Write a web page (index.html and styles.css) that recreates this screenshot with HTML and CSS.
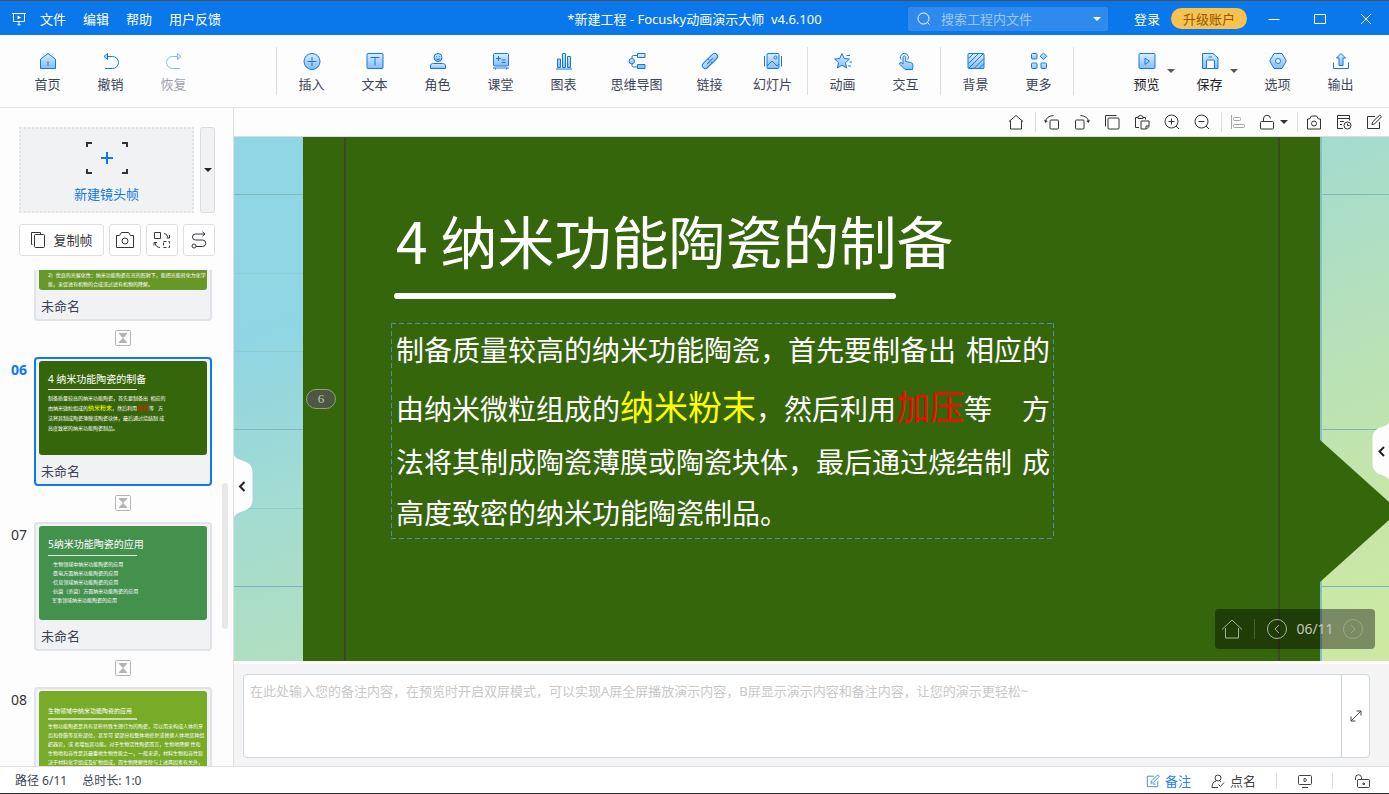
FILE: index.html
```html
<!DOCTYPE html>
<html lang="zh-CN">
<head>
<meta charset="utf-8">
<title>Focusky动画演示大师</title>
<link rel="stylesheet" href="styles.css">
</head>
<body>
<svg class="defs" aria-hidden="true"><defs><linearGradient id="g" x1="0" y1="0" x2="0" y2="1"><stop offset="0" stop-color="#dcecfe"/><stop offset="1" stop-color="#84bdfb"/></linearGradient></defs></svg>

<header class="titlebar">
  <nav class="menu">
    <svg class="logo" width="14" height="14" viewBox="0 0 14 14"><path d="M0 1.500h14M1.500 1.500v8h11v-8M7 9.500v3.500M5.500 12l1.500 1.500L8.500 12"/><path class="solid" d="M5.500 3.500v4l3.500-2z"/></svg>
    <button>文件</button><button>编辑</button><button>帮助</button><button>用户反馈</button>
  </nav>
  <div class="title">*新建工程 - Focusky动画演示大师&nbsp; v4.6.100</div>
  <div class="title-right">
    <label class="search">
      <svg width="14" height="14" viewBox="0 0 14 14"><circle cx="6.500" cy="6.500" r="5.500"/><path d="M10.500 10.500l2 2"/></svg>
      <input type="text" placeholder="搜索工程内文件" aria-label="搜索工程内文件">
      <span class="caret"></span>
    </label>
    <button class="login">登录</button>
    <button class="upgrade">升级账户</button>
    <div class="window-buttons">
      <button aria-label="最小化"><svg width="12" height="12" viewBox="0 0 12 12"><path d="M.5 6.500h11"/></svg></button>
      <button aria-label="最大化"><svg width="12" height="12" viewBox="0 0 12 12"><path d="M.5 1.500h11v9H.5z"/></svg></button>
      <button aria-label="关闭"><svg width="12" height="12" viewBox="0 0 12 12"><path d="M1 1l10 10M11 1L1 11"/></svg></button>
    </div>
  </div>
</header>

<div class="ribbon">
  <button class="tool"><svg viewBox="0 0 18 18"><path class="f" d="M1.500 16.500V7.200L9 1.500l7.500 5.700v9.300z"/><path d="M9 9v5"/></svg>首页</button>
  <button class="tool"><svg viewBox="0 0 18 18"><path d="M6 4.500h4.500a6 6 0 0 1 0 12H3"/><path class="f" d="M2 4.500l3.500-3v6z"/></svg>撤销</button>
  <button class="tool" disabled><svg viewBox="0 0 18 18"><path d="M12 4.500H7.500a6 6 0 0 0 0 12H15"/><path class="f" d="M16 4.500l-3.500-3v6z"/></svg>恢复</button>
  <span class="rule rule-first"></span>
  <button class="tool"><svg viewBox="0 0 18 18"><circle class="f" cx="9" cy="9.500" r="8"/><path d="M9 5v9M4.500 9.500h9"/></svg>插入</button>
  <button class="tool"><svg viewBox="0 0 18 18"><rect class="f" x="1" y="1.500" width="16" height="15" rx="1"/><path d="M4.500 5.500h9M9 5.500v8"/></svg>文本</button>
  <button class="tool"><svg viewBox="0 0 18 18"><path class="f" d="M1.500 16.500v-2.500c0-1.700 1-2.500 3-2.500h9c2 0 3 .8 3 2.500v2.500z"/><circle class="f" cx="9" cy="5.500" r="4"/><path d="M7 6.500c.8 1.500 3.200 1.500 4 0M7.500 4.200v.6M10.500 4.200v.6"/></svg>角色</button>
  <button class="tool"><svg viewBox="0 0 18 18"><rect class="f" x="1.500" y="1.500" width="15" height="12.500" rx="1"/><path d="M1 16h16M3.500 16v1.500M14.500 16v1.500M4 6.500h5M6.500 4v5M9.500 8h4M9.500 10.500h4"/></svg>课堂</button>
  <button class="tool"><svg viewBox="0 0 18 18"><path class="f" d="M2.500 7h3v8.500h-3zM7.500 1.500h3v14h-3zM12.500 4.500h3v11h-3z"/><path d="M1 17h16"/></svg>图表</button>
  <button class="tool tool-wide"><svg viewBox="0 0 18 18"><path d="M4 6.500V5q0-1.500 1.500-1.500H9M4 12v1.500Q4 15 5.500 15H9"/><circle class="f" cx="3.800" cy="9.200" r="2.700"/><path class="f" d="M9.500 1.500H17v4H9.500zM9.500 12.500H17v4H9.500z"/></svg>思维导图</button>
  <button class="tool"><svg viewBox="0 0 18 18"><g transform="rotate(-45 9 9)"><rect class="f" x="-.5" y="6" width="19" height="6" rx="3"/><path d="M5 9h8M9 6v1.500M9 10.500v1.500"/></g></svg>链接</button>
  <button class="tool"><svg viewBox="0 0 18 18"><rect class="f" x="3" y="1.500" width="12" height="15" rx="1"/><path d="M3 14l5-5 5 5 2-2M.5 4v10.500M17.500 4v10.500"/><circle cx="11.500" cy="5.500" r="1.500"/></svg>幻灯片</button>
  <span class="rule"></span>
  <button class="tool"><svg viewBox="0 0 18 18"><path class="f" d="M8 1.500l2.200 5 5.300.5-4 3.700 1.200 5.300L8 13.300 3.300 16l1.200-5.300L.6 7l5.200-.5z"/><path d="M12.500 3.500H16M15.500 10H18M14 14h3"/></svg>动画</button>
  <button class="tool"><svg viewBox="0 0 18 18"><path class="f" d="M6 5.500q0-1.500 1.300-1.500T8.700 5.500V9.500l5 1q2.500.6 2.300 3l-.5 4H8L3 12.500q-1.500-1.800 1-2L6 12z"/><path d="M4 7.500A4 4 0 1 1 10.800 7.500"/></svg>交互</button>
  <span class="rule"></span>
  <button class="tool"><svg viewBox="0 0 18 18"><rect class="f" x="1" y="1.500" width="16" height="15" rx="1"/><path d="M1.500 6.500l5-5M1.500 11.500l10-10M2 16L16.500 1.500M7 16.500l10-10M12 16.500l5-5"/></svg>背景</button>
  <button class="tool"><svg viewBox="0 0 18 18"><rect class="f" x="1.500" y="1.500" width="5.500" height="5.500" rx="1"/><path class="f" d="M13.500 1l3.300 3.300-3.300 3.300-3.300-3.300z"/><rect class="f" x="1.500" y="11" width="5.500" height="5.500" rx="1"/><rect class="f" x="11" y="11" width="5.500" height="5.500" rx="1"/></svg>更多</button>
  <span class="rule"></span>
  <div class="ribbon-end">
    <button class="tool tool-dark"><svg viewBox="0 0 18 18"><rect class="f" x="1" y="1.500" width="16" height="15" rx="1"/><path d="M7 6v6.500l4.500-3.300z"/></svg>预览<span class="caret"></span></button>
    <button class="tool tool-dark"><svg viewBox="0 0 18 18"><path class="f" d="M1.500 1.500H12L17 6v10.500H1.500z"/><path class="w" d="M5.500 16.500V9q0-1 1-1h6q1 0 1 1v7.500z"/><path d="M7.500 5H11"/></svg>保存<span class="caret"></span></button>
    <button class="tool tool-gap"><svg viewBox="0 0 18 18"><path class="f" d="M5 1.500h8l4.300 7.500-4.300 7.500H5L.7 9z"/><circle class="w" cx="9" cy="9" r="2.500"/></svg>选项</button>
    <button class="tool"><svg viewBox="0 0 18 18"><path class="f" d="M9 1.500l4.500 4.500h-2.500v7.500H7V6H4.500z"/><path d="M1.500 10.500v6h15v-6"/></svg>输出</button>
  </div>
</div>

<div class="workspace">
  <aside class="sidebar">
    <div class="new-row">
      <button class="new-frame">
        <svg width="44" height="34" viewBox="0 0 44 34"><path class="corner" d="M2 6V2h5M37 2h5v4M2 28v4h5M37 32h5v-4"/><path class="plus" d="M22 11v12M16 17h12"/></svg>
        新建镜头帧
      </button>
      <button class="new-more" aria-label="更多镜头帧"><span class="caret"></span></button>
    </div>
    <div class="frame-tools">
      <button class="copy"><svg width="16" height="18" viewBox="0 0 16 18"><path d="M2.500 13.500h-1v-12h9v2"/><rect x="4.500" y="3.500" width="10" height="13" rx="1"/></svg>复制帧</button>
      <button aria-label="截图"><svg width="18" height="18" viewBox="0 0 18 18"><path d="M.5 4.500h3l2-3h7l2 3h3v12H.5z"/><circle cx="9" cy="10" r="3"/></svg></button>
      <button aria-label="替换"><svg width="18" height="18" viewBox="0 0 18 18"><path d="M1.500 1.500h6v6h-6zM11 2.500q3 0 4 4M16.500 4v3h-3M7 16.500q-4 0-5-4.500M1 14.500v-3h3"/><path stroke-dasharray="3 2" d="M10.500 10.500h6v6h-6z"/></svg></button>
      <button aria-label="路径"><svg width="16" height="18" viewBox="0 0 16 18"><path d="M13.500 3H4.500a3 3 0 0 0 0 6h7a3 3 0 0 1 0 6.500H5M11.500.8L14 3l-2.500 2.200"/><circle cx="3" cy="15" r="2"/></svg></button>
    </div>
    <div class="frame-list">
      <ol class="frames">
        <li class="frame"><span class="no"></span>
          <div class="card"><div class="thumb t05"><p>2）优良的光催化性：纳米功能陶瓷在光的照射下，能把光能转化为化学<br>能，来促进有机物的合成或过滤有机物的降解。</p></div><div class="name">未命名</div></div></li>
        <li class="link"><svg width="16" height="16" viewBox="0 0 16 16"><rect x=".5" y=".5" width="15" height="15" rx="1"/><path d="M4 3h8v1L8.500 7.500v1L12 12v1H4v-1l3.500-3.500v-1L4 4z"/></svg></li>
        <li class="frame current"><span class="no">06</span>
          <div class="card"><div class="thumb t06"><h4>4 纳米功能陶瓷的制备</h4><hr><p>制备质量较高的纳米功能陶瓷，首先要制备出 &nbsp;相应的<br>由纳米微粒组成的<b class="yellow">纳米粉末</b>，然后利用<b class="red">加压</b>等 &nbsp; 方<br>法将其制成陶瓷薄膜或陶瓷块体，最后通过烧结制 成<br>高度致密的纳米功能陶瓷制品。</p></div><div class="name">未命名</div></div></li>
        <li class="link"><svg width="16" height="16" viewBox="0 0 16 16"><rect x=".5" y=".5" width="15" height="15" rx="1"/><path d="M4 3h8v1L8.500 7.500v1L12 12v1H4v-1l3.500-3.500v-1L4 4z"/></svg></li>
        <li class="frame"><span class="no">07</span>
          <div class="card"><div class="thumb t07"><h4>5纳米功能陶瓷的应用</h4><hr><p>·生物领域中纳米功能陶瓷的应用<br>·医电方面纳米功能陶瓷的应用<br>·信息领域纳米功能陶瓷的应用<br>·抗菌（杀菌）方面纳米功能陶瓷的应用<br>军事领域纳米功能陶瓷的应用</p></div><div class="name">未命名</div></div></li>
        <li class="link"><svg width="16" height="16" viewBox="0 0 16 16"><rect x=".5" y=".5" width="15" height="15" rx="1"/><path d="M4 3h8v1L8.500 7.500v1L12 12v1H4v-1l3.500-3.500v-1L4 4z"/></svg></li>
        <li class="frame"><span class="no">08</span>
          <div class="card"><div class="thumb t08"><h4>生物领域中纳米功能陶瓷的应用</h4><hr><p>生物功能陶瓷是具有某些特殊生理行为的陶瓷，可以用来构成人体的牙<br>齿和骨骼等某些部位，甚至可 望部分和整体地修复或替换人体地某种组<br>织器官，或 者增加其功能。对于生物活性陶瓷而言，生物地降解 性和<br>生物地和容性是其最重地生物性能之一，一般来讲，材料生物和容性取<br>决于材料化学组成及矿物组成，而生物降解性除与上述两因素有关外，</p></div></div></li>
      </ol>
      <span class="scrollbar"></span>
    </div>
  </aside>

  <main class="editor">
    <div class="quickbar">
      <button aria-label="主页"><svg viewBox="0 0 16 16"><path d="M1 7.500l7-6 7 6M2.500 6.500V15h11V6.500"/></svg></button>
      <span class="rule"></span>
      <button aria-label="左转"><svg viewBox="0 0 16 16"><rect x="6" y="6" width="8.500" height="9" rx="1"/><path d="M1.500 8Q2 2 9.500 1.500"/><path class="s" d="M.2 5.800L3.800 7 1.200 9z"/></svg></button>
      <button aria-label="右转"><svg viewBox="0 0 16 16"><rect x="1.500" y="6" width="8.500" height="9" rx="1"/><path d="M14.500 8Q14 2 6.500 1.500"/><path class="s" d="M15.800 5.800L12.200 7l2.600 2z"/></svg></button>
      <button aria-label="复制"><svg viewBox="0 0 16 16"><path d="M1.500 12.500v-11h11"/><rect x="4" y="4" width="11" height="11" rx="1"/></svg></button>
      <button aria-label="粘贴"><svg viewBox="0 0 16 16"><path d="M5 13.500H1.500v-10H4M9 3.500h2.500v2M4 2.500q2.500-2.500 5 0v2H4z"/><path d="M7 7h8v5.500L12.500 15H7zM15 12h-3v3"/></svg></button>
      <button aria-label="放大"><svg viewBox="0 0 16 16"><circle cx="7.500" cy="7.500" r="6.500"/><path d="M4.500 7.500h6M7.500 4.500v6M12 12l3 3"/></svg></button>
      <button aria-label="缩小"><svg viewBox="0 0 16 16"><circle cx="7.500" cy="7.500" r="6.500"/><path d="M4.500 7.500h6M12 12l3 3"/></svg></button>
      <span class="rule"></span>
      <button aria-label="对齐" disabled><svg viewBox="0 0 16 16"><path d="M1.500 1v14"/><rect x="3.500" y="3.500" width="7" height="3" rx="1"/><rect x="3.500" y="10.500" width="11" height="3" rx="1"/></svg></button>
      <button class="wide" aria-label="锁定"><svg viewBox="0 0 16 16"><rect x="1.500" y="7.500" width="13" height="7.500" rx="1"/><path d="M4.500 7.500V5a3.500 3.500 0 0 1 7-.5"/></svg><span class="caret"></span></button>
      <span class="rule"></span>
      <button aria-label="相机"><svg viewBox="0 0 16 16"><path d="M1.500 5h2l2-3h5l2 3h2v10h-13z"/><circle cx="8" cy="9.500" r="2.500"/></svg></button>
      <button aria-label="历史"><svg viewBox="0 0 16 16"><path d="M7 14.500H1.500v-13h12v5M1.500 4.500h12M4 7.500h4M4 10.500h2"/><circle cx="11.500" cy="11.500" r="3.500"/><path d="M11.500 9.500v2h2"/></svg></button>
      <button aria-label="编辑"><svg viewBox="0 0 16 16"><path d="M9 2.500H1.500v12h12V8M6 10.500l.5-2.500 7.300-7 1.700 1.700-7 7.300z"/></svg></button>
    </div>

    <div class="canvas">
      <svg class="guides" width="100%" height="100%">
        <g class="soft"><line x1="0" x2="100%" y1="57.500" y2="57.500"/><line x1="0" x2="100%" y1="292.500" y2="292.500"/></g>
        <g class="faint"><line x1="0" x2="69" y1="136.500" y2="136.500"/><line x1="0" x2="69" y1="214.500" y2="214.500"/><line x1="0" x2="69" y1="371.500" y2="371.500"/></g>
        <g class="strong"><line x1="0" x2="100%" y1="449.500" y2="449.500"/></g>
      </svg>
      <section class="slide">
        <svg class="arrow" width="80" height="142" viewBox="0 0 80 142"><path d="M0 0l79 71-79 71z"/></svg>
        <div class="page">
          <h1>4 纳米功能陶瓷的制备</h1>
          <hr>
          <div class="copybox">
            <p><span>制备质量较高的纳米功能陶瓷，首先要制备出</span><span>相应的</span></p>
            <p class="tall"><span>由纳米微粒组成的<b class="yellow">纳米粉末</b>，然后利用<b class="red">加压</b>等</span><span>方</span></p>
            <p><span>法将其制成陶瓷薄膜或陶瓷块体，最后通过烧结制</span><span>成</span></p>
            <p><span>高度致密的纳米功能陶瓷制品。</span></p>
          </div>
        </div>
        <span class="badge">6</span>
      </section>
      <button class="tab tab-left" aria-label="收起"><svg width="19" height="62" viewBox="0 0 19 62"><path class="shape" d="M0 0Q2 4 8 5.500 18.500 8 18.500 17v28q0 9-10.500 11.500-6 1.500-8 5.500z"/><path class="chev" d="M10.500 27L6 31.500l4.500 4.500"/></svg></button>
      <button class="tab tab-right" aria-label="展开"><svg width="17" height="58" viewBox="0 0 17 58"><path class="shape" d="M17 0Q16 3 11 4.500.5 7 .5 16v26Q.5 51 11 53.500q5 1.500 6 4.500z"/><path class="chev" d="M12 25l-4.500 4.500L12 34"/></svg></button>
      <div class="pager">
        <button aria-label="首页"><svg width="20" height="20" viewBox="0 0 20 20"><path d="M0 10.500L10 1l10 9.500M3.500 9v10h13V9"/></svg></button>
        <span class="rule"></span>
        <button aria-label="上一页"><svg width="20" height="20" viewBox="0 0 20 20"><circle cx="10" cy="10" r="9.500"/><path d="M12 6l-4 4 4 4"/></svg></button>
        <span class="count">06/11</span>
        <button class="dim" aria-label="下一页"><svg width="20" height="20" viewBox="0 0 20 20"><circle cx="10" cy="10" r="9.500"/><path d="M8 6l4 4-4 4"/></svg></button>
      </div>
    </div>

    <div class="notes">
      <div class="notes-box">
        <textarea aria-label="备注" placeholder="在此处输入您的备注内容，在预览时开启双屏模式，可以实现A屏全屏播放演示内容，B屏显示演示内容和备注内容，让您的演示更轻松~"></textarea>
        <button aria-label="放大备注"><svg width="12" height="12" viewBox="0 0 12 12"><path d="M1 11L11 1M6.500 1H11v4.500M1 6.500V11h4.500"/></svg></button>
      </div>
    </div>
  </main>
</div>

<footer class="status">
  <span>路径 6/11</span><span>总时长: 1:0</span>
  <div class="status-end">
    <button class="on"><svg width="14" height="14" viewBox="0 0 16 16"><path d="M9 2.500H1.500v12h12V8M5.500 10.500l.5-2.500 7.500-7 1.700 1.700-7 7.300zM8 11.500h3"/></svg>备注</button>
    <button><svg width="14" height="14" viewBox="0 0 14 14"><circle cx="7" cy="4" r="3"/><path d="M5 7q-4 1-4 6.500h6M9 7.500l1 .5M7.500 10.500L9.500 12.500 13 8.500"/></svg>点名</button>
    <span class="rule"></span>
    <button class="square" aria-label="放映"><svg width="14" height="14" viewBox="0 0 14 14"><rect x=".5" y="1.500" width="13" height="9" rx="1"/><path d="M6 4.500h1.500l1 1.500-1 1.500H6zM4 13.500h6"/></svg></button>
    <span class="rule"></span>
    <button class="square" aria-label="解锁"><svg width="16" height="14" viewBox="0 0 16 14"><rect x="3.500" y="5.500" width="12" height="8" rx="1"/><path d="M1.500 6V4a3 3 0 0 1 6-.5v2M9 9h1.500v1.500H9z"/></svg></button>
  </div>
</footer>
</body>
</html>
```

FILE: styles.css
```css
* { box-sizing: border-box; }

body {
  margin: 0;
  height: 100vh;
  display: flex;
  flex-direction: column;
  overflow: hidden;
  background: #fdfdfe;
  color: #3c4358;
  font: 13px/20px "Noto Sans", "Noto Sans CJK SC", sans-serif;
}

button, input, textarea {
  font: inherit;
  color: inherit;
  background: none;
  border: 0;
  padding: 0;
  margin: 0;
}

button { display: flex; align-items: center; justify-content: center; white-space: nowrap; }
svg { display: block; fill: none; stroke: currentColor; flex: none; }
p, h1, h4, ol, hr { margin: 0; padding: 0; font-weight: 400; }
hr { border: 0; }
.defs { position: absolute; width: 0; height: 0; }

.caret {
  width: 0;
  height: 0;
  border: 4px solid transparent;
  border-top: 4px solid currentColor;
  border-bottom: 0;
}

/* title bar */
.titlebar {
  height: 35px;
  flex: none;
  display: grid;
  grid-template-columns: 1fr auto 1fr;
  align-items: center;
  padding-top: 1px;
  background: #0a77eb;
  border-top: 1px solid #4b5257;
  color: #fff;
}
.menu { display: flex; align-items: center; gap: 17px; padding-left: 12px; }
.logo { margin-right: -3px; }
.logo .solid { fill: #fff; stroke: none; }
.title-right { display: flex; align-items: center; justify-content: flex-end; }
.search {
  width: 200px;
  height: 24px;
  display: flex;
  align-items: center;
  padding: 0 7px 0 9px;
  border-radius: 2px;
  background: #2f8aed;
  color: #fff;
}
.search input { flex: 1; min-width: 0; margin-left: 10px; outline: 0; }
.search input::placeholder { color: #9cc7f7; opacity: 1; }
.login { margin: 0 11px 0 26px; }
.upgrade {
  width: 76px;
  height: 21px;
  border-radius: 11px;
  background: #f9c24e;
  color: #8a5a08;
}
.window-buttons { display: flex; margin-left: 4px; }
.window-buttons button { width: 46px; height: 33px; }

/* ribbon */
.ribbon {
  height: 73px;
  flex: none;
  display: flex;
  padding: 0 17px 0 16px;
  border-bottom: 1px solid #e0e0e2;
}
.tool {
  position: relative;
  width: 63px;
  flex-direction: column;
  justify-content: flex-start;
  gap: 4px;
  padding-top: 17px;
}
.tool svg { width: 18px; height: 18px; color: #1079e6; }
.tool .f { fill: url(#g); }
.tool .w { fill: #fdfdfe; }
.tool:disabled { opacity: .5; }
.tool-wide { width: 83px; }
.tool-dark { color: #1c1e24; }
.tool-gap { margin-left: 5px; }
.tool .caret { position: absolute; right: 3px; top: 34px; color: #555; }
.rule { width: 1px; flex: none; background: #dfdfe2; }
.ribbon .rule { height: 48px; margin: 12px 3px 0; }
.ribbon .rule-first { margin-left: 71px; }
.ribbon-end { display: flex; margin-left: auto; }

.workspace { flex: 1; min-height: 0; display: flex; }

/* sidebar */
.sidebar {
  width: 234px;
  flex: none;
  display: flex;
  flex-direction: column;
  padding-top: 19px;
  border-right: 1px solid #e0e0e2;
}
.new-row { display: flex; gap: 6px; height: 86px; flex: none; padding: 0 18px 0 19px; }
.new-frame {
  flex: 1;
  flex-direction: column;
  gap: 9px;
  padding-top: 4px;
  background: #f1f2f4;
  border: 2px dotted #e2e3e5;
  color: #1079e6;
}
.new-frame .corner { stroke: #333; stroke-width: 2; }
.new-frame .plus { stroke-width: 2; }
.new-more { width: 15px; background: #f1f2f4; border: 1px solid #dcdde0; border-radius: 3px; color: #222; }
.frame-tools { display: flex; gap: 5px; padding: 11px 18px 14px 19px; }
.frame-tools button {
  width: 32px;
  height: 32px;
  background: #fff;
  border: 1px solid #dedfe2;
  border-radius: 3px;
  color: #33363c;
}
.frame-tools .copy { flex: 1; gap: 7px; }
.frame-list { position: relative; flex: 1; min-height: 0; overflow: hidden; }
.frames { list-style: none; margin-top: -78px; padding: 0 21px 0 11px; }
.frame { display: flex; }
.no { width: 23px; flex: none; padding-top: 3px; font-size: 14px; color: #333; }
.card {
  flex: 1;
  min-width: 0;
  height: 129px;
  padding: 2px 3px;
  border: 2px solid #e0e3e8;
  border-radius: 4px;
  background: #f1f2f4;
}
.current .card { border-color: #0f78ea; }
.current .no { color: #0f78ea; font-weight: 700; }
.name { padding: 6px 2px; }
.link { display: flex; justify-content: center; padding: 9px 0 11px 22px; color: #b3b3b3; }
.link path { fill: #b3b3b3; stroke: none; }
.scrollbar { position: absolute; right: 5px; top: 213px; width: 6px; height: 146px; border-radius: 3px; background: #e8e8e9; }

.thumb { height: 94px; overflow: hidden; padding: 0 9px; border-radius: 3px; color: #fff; font-size: 5px; line-height: 9px; white-space: nowrap; }
.thumb h4 { font-size: 10px; line-height: 16px; padding-top: 10px; }
.thumb hr { width: 89px; height: 1px; background: #fff; }
.thumb b { font-weight: 400; font-size: 6px; }
.yellow { color: #ff0; }
.red { color: #f10b00; }
.t05 { background: #679727; padding-top: 75px; }
.t06 { background: #36660c; }
.t06 h4 { padding-top: 10px; }
.t06 hr { margin-top: 2px; }
.t06 p { padding-top: 3px; line-height: 10px; }
.t07 { background: #44914d; }
.t07 hr { margin-top: 3px; opacity: .8; }
.t07 p { padding: 4px 4px 0; }
.t08 { background: #77ab28; }
.t08 h4 { font-size: 6px; padding-top: 12px; }
.t08 hr { height: 2px; margin-top: -1px; opacity: .6; }
.t08 p { padding-top: 2px; }

/* editor */
.editor { flex: 1; min-width: 0; display: flex; flex-direction: column; }
.quickbar {
  height: 29px;
  flex: none;
  display: flex;
  align-items: center;
  justify-content: flex-end;
  border-bottom: 1px solid #dcdcdc;
  color: #333;
}
.quickbar button { width: 30px; height: 28px; }
.quickbar .wide { width: 40px; gap: 5px; }
.quickbar button svg { width: 16px; height: 16px; }
.quickbar button:disabled { color: #a5a5a5; }
.quickbar .s { fill: currentColor; stroke: none; }
.quickbar .rule { height: 20px; margin: 0 1px 0 4px; }

.canvas {
  position: relative;
  flex: 1;
  overflow: hidden;
  background: linear-gradient(160deg, #90d6e5 0%, #8fd5e3 22%, #a4dcd0 42%, #b5e0bb 62%, #c6e6a8 82%, #cde9a2 100%);
}
.guides { position: absolute; inset: 0; }
.soft { stroke: #7fb9bc; }
.faint { stroke: #8dccd2; }
.strong { stroke: #7fb0c2; }
.slide {
  position: absolute;
  inset: 0 69px;
  background: #36660c;
  box-shadow: 2px 0 0 #86bfc4;
}
.arrow { position: absolute; left: 100%; top: 303px; fill: #36660c; stroke: none; }
.page {
  height: 100%;
  margin: 0 40px 0 41px;
  padding: 62px 45px;
  border: solid #3b4a23;
  border-width: 0 2px;
  color: #fff;
  font-family: "Noto Sans CJK SC", sans-serif;
}
.page h1 { font-size: 57px; line-height: 80px; padding: 0 5px; white-space: nowrap; }
.page hr { width: 502px; height: 6px; margin: 14px 3px 24px; border-radius: 3px; background: #fff; }
.copybox {
  width: 663px;
  padding: 1px 4px 1px 5px;
  font-size: 28px;
  background:
    repeating-linear-gradient(90deg, #4a8fa8 0 5px, transparent 5px 8px) top / 100% 1px no-repeat,
    repeating-linear-gradient(90deg, #4a8fa8 0 5px, transparent 5px 8px) bottom / 100% 1px no-repeat,
    repeating-linear-gradient(#4a8fa8 0 5px, transparent 5px 8px) left / 1px 100% no-repeat,
    repeating-linear-gradient(#4a8fa8 0 5px, transparent 5px 8px) right / 1px 100% no-repeat;
}
.copybox p { display: flex; align-items: baseline; justify-content: space-between; line-height: 51px; white-space: nowrap; }
.copybox .tall { line-height: 56px; padding-top: 3px; }
.copybox b { font-weight: 400; font-size: 34px; }
.badge {
  position: absolute;
  left: 3px;
  top: 252px;
  width: 30px;
  border: 1px solid #8fa478;
  border-radius: 10px;
  background: #4c5842;
  color: #c0c6b6;
  font: 13px/18px "Liberation Serif", serif;
  text-align: center;
}
.tab { position: absolute; }
.tab-left { left: 0; top: 318px; }
.tab-right { right: 0; top: 285px; }
.tab .shape { fill: #fdfdfe; stroke: none; }
.tab .chev { stroke: #222; stroke-width: 2; }
.pager {
  position: absolute;
  right: 14px;
  bottom: 12px;
  width: 160px;
  height: 40px;
  display: flex;
  align-items: center;
  padding: 0 12px 0 7px;
  border-radius: 4px;
  background: rgba(0, 0, 0, .4);
  color: #a9b39c;
  font-size: 14px;
}
.count { margin: 0 auto; color: #c4c9bd; }
.pager .rule { height: 20px; margin: 0 12px; background: #4a5c38; }
.pager .dim { opacity: .7; }

.notes { flex: none; padding: 10px 19px 8px 9px; background: #f4f4f4; border-top: 3px solid #fff; }
.notes-box { height: 84px; display: flex; border: 1px solid #cdd7e1; border-radius: 4px; background: #fff; }
.notes-box textarea { flex: 1; padding: 6px 6px; resize: none; outline: 0; }
.notes-box textarea::placeholder { color: #c8c8c8; opacity: 1; }
.notes-box button { width: 28px; border-left: 1px solid #cdd7e1; color: #444; }

/* status bar */
.status {
  height: 28px;
  flex: none;
  display: flex;
  align-items: center;
  gap: 15px;
  padding: 2px 15px 0;
  border-top: 1px solid #e0e0e2;
  border-bottom: 1px solid #26282c;
  background: #fff;
  font-size: 12px;
}
.status-end { display: flex; align-items: center; margin-left: auto; font-size: 13px; color: #444; }
.status-end button { gap: 5px; margin-right: 20px; }
.status-end .on { color: #2a80f0; }
.status-end .rule { height: 16px; margin-right: 21px; }
.status-end .square:last-child { margin-right: 4px; }
```
